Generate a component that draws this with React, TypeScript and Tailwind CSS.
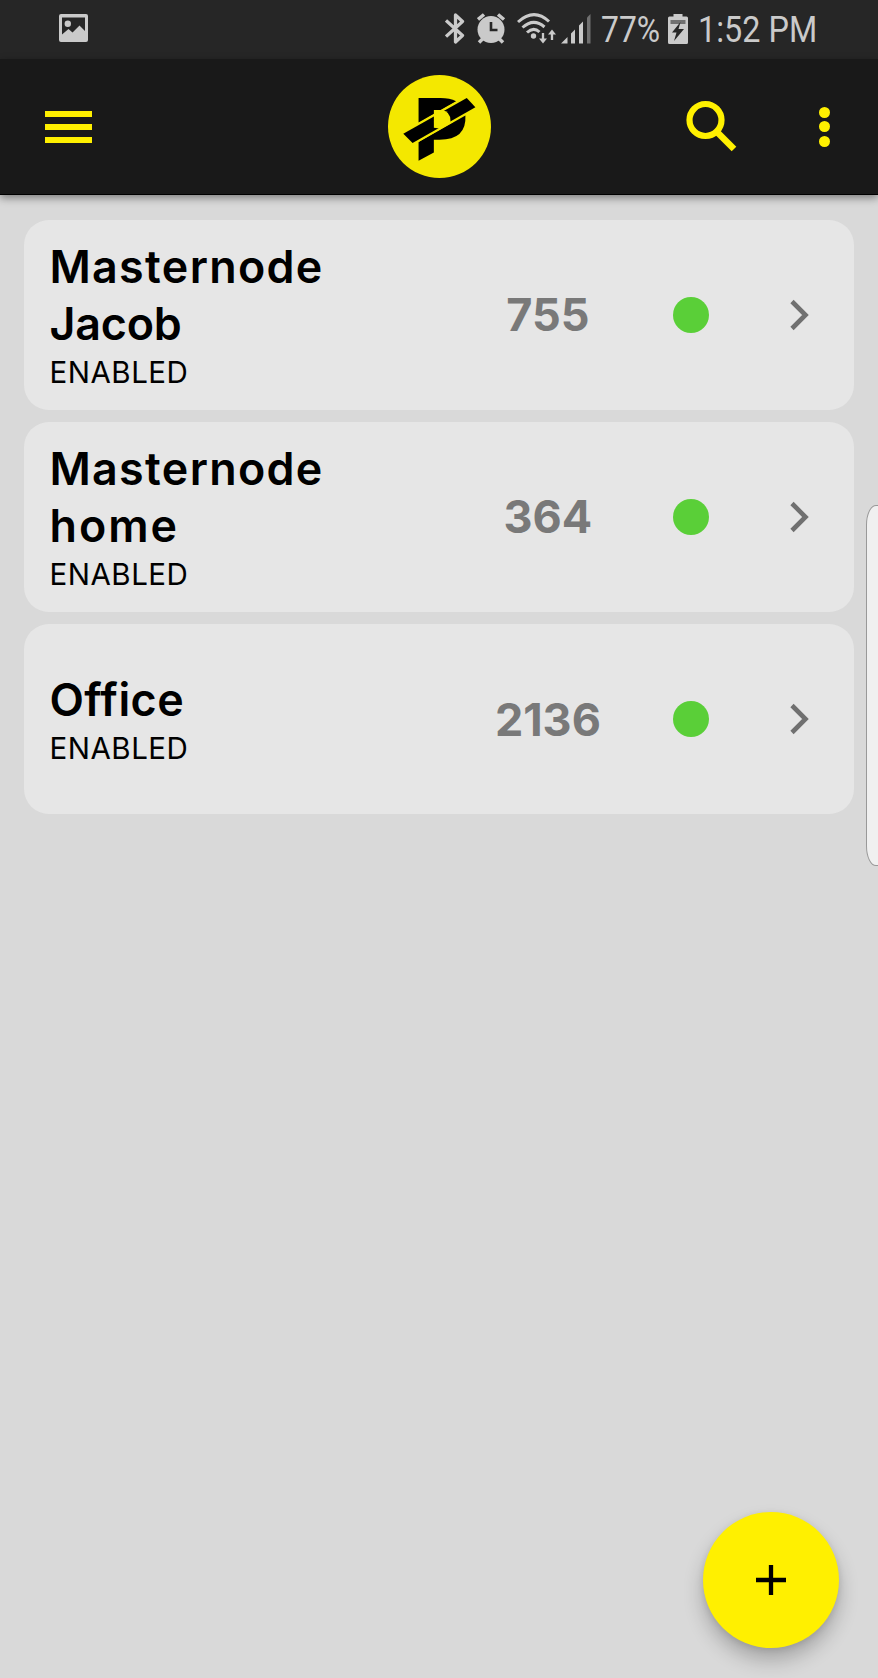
type Line = { text: string; tracking: string };
type Node = { name: Line[]; status: string; count: string };

const nodes: Node[] = [
  {
    name: [
      { text: "Masternode", tracking: "tracking-[0.030em]" },
      { text: "Jacob", tracking: "tracking-[-0.004em]" },
    ],
    status: "ENABLED",
    count: "755",
  },
  {
    name: [
      { text: "Masternode", tracking: "tracking-[0.030em]" },
      { text: "home", tracking: "tracking-[0.046em]" },
    ],
    status: "ENABLED",
    count: "364",
  },
  { name: [{ text: "Office", tracking: "tracking-[0.010em]" }], status: "ENABLED", count: "2136" },
];

function StatusBar() {
  return (
    <div className="flex h-[59px] shrink-0 items-start bg-[#262626] text-[#cacaca]">
      <svg className="mt-[14px] ml-[59px] h-[28px] w-[29px]" viewBox="0 0 29 28" fill="currentColor">
        <path fillRule="evenodd" d="M2 0H27Q29 0 29 2V26Q29 28 27 28H2Q0 28 0 26V2Q0 0 2 0ZM3 3.5V20.5L9.5 15L13.5 18.5L20.5 11.5L26 17V3.5Z" />
        <circle cx="8.8" cy="9.8" r="3.2" />
      </svg>
      <svg className="mt-[12px] ml-[357px] h-[33px] w-[20px]" viewBox="0 0 20 33" fill="none" stroke="currentColor" strokeWidth="3.3" strokeLinejoin="round">
        <path d="M1 8.500L17.500 23.500L10.500 30V3L17.500 9.500L1 24.500" />
      </svg>
      <svg className="mt-[13px] ml-[12px] h-[32px] w-[30px]" viewBox="0 0 30 32" fill="none" stroke="currentColor">
        <circle cx="14" cy="16.500" r="13.500" fill="currentColor" stroke="none" />
        <path strokeWidth="3.500" d="M1 6.500L7 1.500M21 1.500L27 6.500M2 29.500L6 25.500M22 25.500L26 29.500" />
        <path stroke="#262626" strokeWidth="2.600" d="M14 9V17H20.500" />
      </svg>
      <svg className="mt-[12px] ml-[9.500px] h-[33px] w-[40px]" viewBox="0 0 40 33" fill="none" stroke="currentColor" strokeWidth="3">
        <path d="M1 10Q17 -4.500 32 9.500M5.500 15.500Q16.500 5.500 27.500 15M10 20.500Q16.500 14.500 22.500 20" />
        <circle cx="16.500" cy="24" r="2.700" fill="currentColor" stroke="none" />
        <path strokeWidth="2.300" d="M26 21V28.500M35 28V20" />
        <path fill="currentColor" stroke="none" d="M22 26.500H30L26 31.500ZM31 22.500H39L35 17.500Z" />
      </svg>
      <svg className="mt-[13px] ml-[4px] h-[31px] w-[30px]" viewBox="0 0 30 31" fill="currentColor">
        <path d="M0 30.500L6.500 24V30.500ZM10 20.500L14 16.500V30.500H10ZM18 12.500L22 8.500V30.500H18Z" />
        <path fill="#707070" d="M26 4.500L29.500 1V30.500H26Z" />
      </svg>
      <span className="ml-[10.500px] block w-[66.500px] origin-left scale-x-[0.86] whitespace-nowrap font-['Roboto',sans-serif] text-[37px] leading-[60px]">77%</span>
      <svg className="mt-[14px] ml-[0.500px] h-[30px] w-[20px]" viewBox="0 0 20 30" fill="currentColor">
        <path d="M5.500 0H14.500V2.500H18.500Q20 2.500 20 4V28.500Q20 30 18.500 30H1.500Q0 30 0 28.500V4Q0 2.500 1.500 2.500H5.500Z" />
        <path fill="#707070" d="M2.500 6H17.500V10H2.500Z" />
        <path fill="#262626" d="M12.500 8L4 18.500H8.500L6 27L16 15H10.500Z" />
      </svg>
      <span className="ml-[9.500px] block origin-left scale-x-[0.875] whitespace-nowrap font-['Roboto',sans-serif] text-[37px] leading-[60px]">1:52 PM</span>
    </div>
  );
}

function Logo() {
  return (
    <svg className="h-[103px] w-[103px]" viewBox="52 45 310 310">
      <circle cx="207" cy="200" r="155" fill="#f4e800" />
      <path d="M144 114H210Q238 114 257 124L144 188Z" />
      <path d="M144 247L285 167Q289 240 207 240H190V278L144 303Z" />
      <path d="M98 222L289 114L315 142L126 250Z" />
      <path d="M190 150H214Q240 154 240 183V188L208 206L190 204Z" fill="#f4e800" />
      <path d="M134 250L250 183M140 194L266 122" stroke="#f4e800" strokeWidth="4" />
    </svg>
  );
}

function AppBar() {
  return (
    <header className="relative z-10 flex h-[136px] shrink-0 items-start border-b border-black bg-[#191919] shadow-[0_3px_8px_rgba(0,0,0,0.42)]">
      <div className="mt-[52px] ml-[45px] flex w-[46.500px] flex-col gap-[7px]">
        <span className="h-[5.500px] bg-[#fff000]" />
        <span className="h-[6px] bg-[#fff000]" />
        <span className="h-[6px] bg-[#fff000]" />
      </div>
      <div className="mt-[16px] ml-[296px]">
        <Logo />
      </div>
      <svg className="mt-[41px] ml-[195px] h-[52px] w-[52px]" viewBox="0 0 52 52" fill="none" stroke="#fff000">
        <circle cx="19.500" cy="20" r="16" strokeWidth="6.200" />
        <path strokeWidth="6.500" d="M31.500 32.500L48 49" />
      </svg>
      <div className="mt-[47.500px] ml-[81.500px] flex flex-col gap-[3.700px]">
        <span className="size-[11px] rounded-full bg-[#fff000]" />
        <span className="size-[11px] rounded-full bg-[#fff000]" />
        <span className="size-[11px] rounded-full bg-[#fff000]" />
      </div>
    </header>
  );
}

function NodeCard({ node }: { node: Node }) {
  return (
    <li className="flex h-[190px] items-center rounded-[25px] bg-[#e6e6e6] pl-[25px] font-['Inter',sans-serif]">
      <div className="w-[408px] pt-[2px]">
        <div className="text-[44.800px] leading-[56.500px] font-semibold text-black">
          {node.name.map((line) => (
            <div key={line.text} className={line.tracking}>
              {line.text}
            </div>
          ))}
        </div>
        <div className="text-[29.500px] leading-[40px] font-normal tracking-[0.018em] text-black">{node.status}</div>
      </div>
      <div className="w-[181px] pt-px text-center text-[45px] leading-[56px] font-bold text-[#797979]">{node.count}</div>
      <span className="ml-[34.500px] size-[36px] rounded-full bg-[#5acf38]" />
      <svg className="ml-[81px] h-[32px] w-[20px]" viewBox="0 0 20 32" fill="none" stroke="#707070" strokeWidth="4.600">
        <path d="M2 2.500L15.500 16L2 29.500" />
      </svg>
    </li>
  );
}

export default function App() {
  return (
    <div className="relative flex h-[1678px] w-[878px] flex-col overflow-hidden bg-[#d9d9d9]">
      <StatusBar />
      <AppBar />
      <ul className="flex flex-col gap-[12.300px] pt-[24.600px] pr-[24.500px] pl-[24.400px]">
        {nodes.map((node) => (
          <NodeCard key={node.count} node={node} />
        ))}
      </ul>
      <div className="absolute top-[505px] -right-[12px] h-[361px] w-[24px] rounded-[10px/20px] border border-[#999999] bg-[#f0f0f0]" />
      <button
        aria-label="Add"
        className="absolute top-[1511.500px] left-[702.500px] flex size-[136.500px] items-center justify-center rounded-full bg-[#fff000] shadow-[0_12px_20px_rgba(0,0,0,0.24),0_2px_6px_rgba(0,0,0,0.10)]"
      >
        <svg className="size-[30px]" viewBox="0 0 30 30" stroke="#000" strokeWidth="4.300">
          <path d="M15 0V30M0 15H30" />
        </svg>
      </button>
    </div>
  );
}
